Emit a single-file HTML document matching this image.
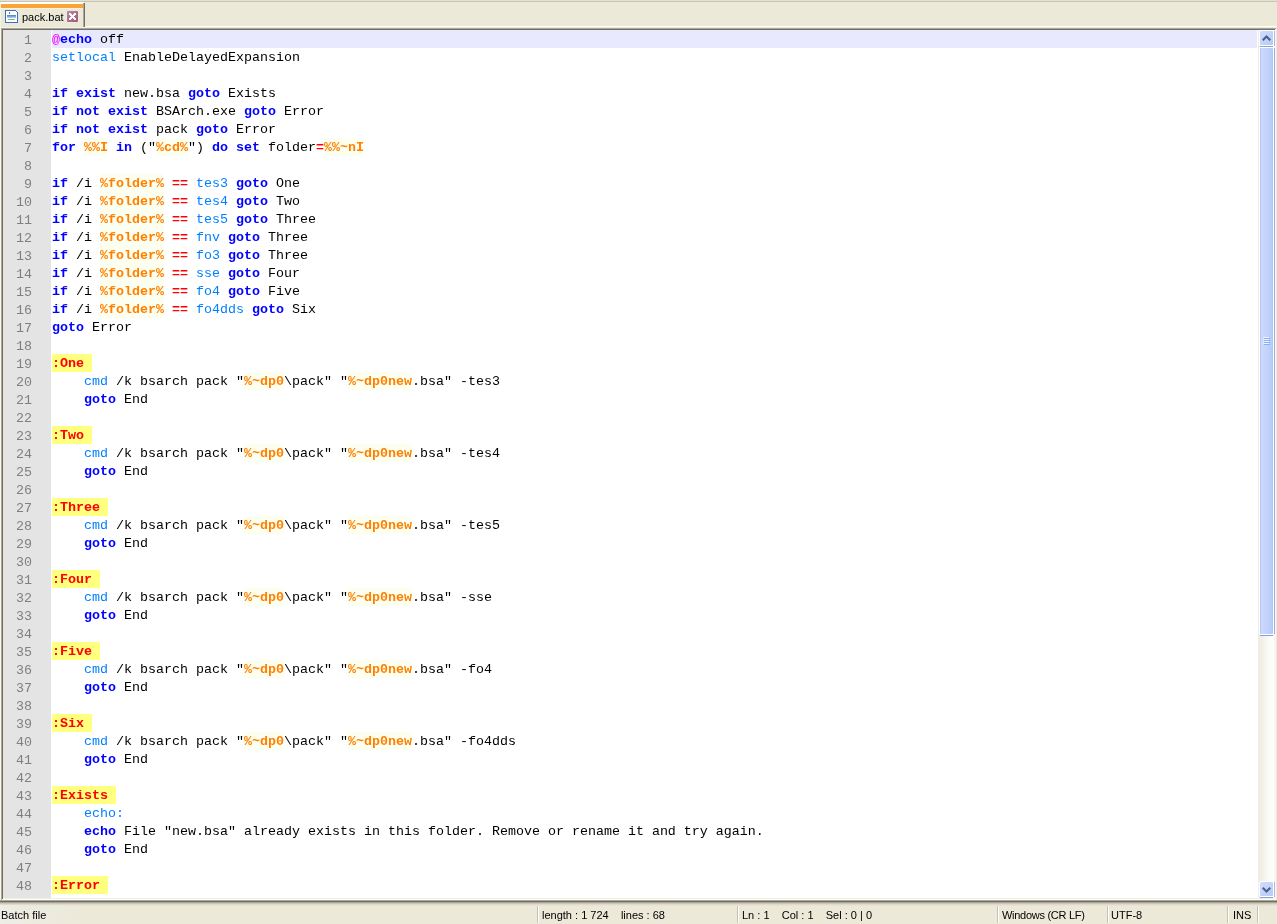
<!DOCTYPE html>
<html><head><meta charset="utf-8">
<style>
*{margin:0;padding:0;box-sizing:border-box}
.ln,.num,.st,.tt{will-change:transform}
html,body{width:1277px;height:924px;overflow:hidden;background:#ECE9D8;position:relative;font-family:"Liberation Sans",sans-serif}
.a{position:absolute}
.num{position:absolute;left:3px;width:29px;height:18px;text-align:right;font-family:"Liberation Mono",monospace;font-size:13.33px;line-height:18px;color:#808080;padding-top:2px}
.ln{position:absolute;left:52px;width:1205px;height:18px;overflow:hidden;font-family:"Liberation Mono",monospace;font-size:13.33px;line-height:18px;color:#000;white-space:pre}
.ln>i{font-style:normal;position:relative;top:1px}
.cur{background:#E8E8FF}
.k{color:#0000FF;font-weight:bold}
.c{color:#0080FF}
.v{color:#FF8000;font-weight:bold;background:#FCFFF0;padding:3px 0 2px}
.o{color:#FF0000;font-weight:bold}
.l{color:#FF0000;font-weight:bold;background:#FFFF80;padding:3px 0 2px}
.h{color:#FF00FF}
.st{position:absolute;top:908px;white-space:pre;color:#000;font-size:11px;line-height:14px}
.sep{position:absolute;top:906px;width:2px;height:17px;border-left:1px solid #C5C2B2;border-right:1px solid #fff}
</style></head><body>
<!-- tab bar -->
<div class="a" style="left:0;top:0;width:1277px;height:1px;background:#E3E1D4"></div>
<div class="a" style="left:0;top:1px;width:1277px;height:1px;background:#C9C5B5"></div>
<div class="a" style="left:0;top:2px;width:1px;height:26px;background:#F5F3E8"></div>
<div class="a" style="left:1px;top:2px;width:83px;height:2px;background:#fff"></div>
<div class="a" style="left:1px;top:4px;width:82px;height:4px;background:#F9A435"></div>
<div class="a" style="left:1px;top:8px;width:82px;height:1px;background:#F4F2E6"></div>
<div class="a" style="left:83px;top:3px;width:1px;height:24px;background:#ACA899"></div>
<div class="a" style="left:84px;top:3px;width:1px;height:24px;background:#716F64"></div>
<div class="a" style="left:85px;top:26px;width:1192px;height:1px;background:#fff"></div>
<div class="a" style="left:1px;top:27px;width:84px;height:1px;background:#F5F2E5"></div>
<!-- icon -->
<svg class="a" style="left:5px;top:10px" width="13" height="13" viewBox="0 0 13 13" shape-rendering="crispEdges">
<path d="M1 1H11L12 2V12H1Z" fill="#fff"/>
<rect x="0" y="0" width="11" height="1" fill="#3B6DC4"/>
<rect x="11" y="1" width="1" height="1" fill="#4A7AC8"/>
<rect x="12" y="2" width="1" height="11" fill="#3B6DC4"/>
<rect x="0" y="0" width="1" height="13" fill="#3B6DC4"/>
<rect x="0" y="12" width="13" height="1" fill="#3B6DC4"/>
<rect x="4" y="2" width="1" height="2" fill="#4A78C8"/>
<rect x="2" y="5" width="9" height="1" fill="#5C8AD6"/>
<rect x="2" y="6" width="9" height="1" fill="#7AA6EA"/>
<rect x="2" y="7" width="9" height="1" fill="#A8C4F0"/>
<rect x="3" y="9" width="7" height="1" fill="#7EC062"/>
</svg>
<div class="a tt" style="left:22px;top:10px;font-size:11px;line-height:14px;white-space:pre">pack.bat</div>
<svg class="a" style="left:67px;top:11px" width="11" height="11" viewBox="0 0 11 11" shape-rendering="crispEdges">
<defs><linearGradient id="cg" x1="0" y1="0" x2="1" y2="1"><stop offset="0" stop-color="#B98AA8"/><stop offset="1" stop-color="#A65674"/></linearGradient></defs>
<rect x="0" y="0" width="11" height="11" fill="url(#cg)"/>
<rect x="0" y="0" width="1" height="1" fill="#A8A0CC"/><rect x="10" y="0" width="1" height="1" fill="#A890B8"/><rect x="0" y="10" width="1" height="1" fill="#A890B8"/><rect x="10" y="10" width="1" height="1" fill="#A890B8"/>
<rect x="2" y="2" width="1" height="1" fill="#fff"/><rect x="3" y="2" width="1" height="1" fill="#fff"/><rect x="7" y="2" width="1" height="1" fill="#fff"/><rect x="8" y="2" width="1" height="1" fill="#fff"/><rect x="2" y="3" width="1" height="1" fill="#fff"/><rect x="3" y="3" width="1" height="1" fill="#fff"/><rect x="4" y="3" width="1" height="1" fill="#fff"/><rect x="6" y="3" width="1" height="1" fill="#fff"/><rect x="7" y="3" width="1" height="1" fill="#fff"/><rect x="8" y="3" width="1" height="1" fill="#fff"/><rect x="3" y="4" width="1" height="1" fill="#fff"/><rect x="4" y="4" width="1" height="1" fill="#fff"/><rect x="5" y="4" width="1" height="1" fill="#fff"/><rect x="6" y="4" width="1" height="1" fill="#fff"/><rect x="7" y="4" width="1" height="1" fill="#fff"/><rect x="4" y="5" width="1" height="1" fill="#fff"/><rect x="5" y="5" width="1" height="1" fill="#fff"/><rect x="6" y="5" width="1" height="1" fill="#fff"/><rect x="3" y="6" width="1" height="1" fill="#fff"/><rect x="4" y="6" width="1" height="1" fill="#fff"/><rect x="5" y="6" width="1" height="1" fill="#fff"/><rect x="6" y="6" width="1" height="1" fill="#fff"/><rect x="7" y="6" width="1" height="1" fill="#fff"/><rect x="2" y="7" width="1" height="1" fill="#fff"/><rect x="3" y="7" width="1" height="1" fill="#fff"/><rect x="4" y="7" width="1" height="1" fill="#fff"/><rect x="6" y="7" width="1" height="1" fill="#fff"/><rect x="7" y="7" width="1" height="1" fill="#fff"/><rect x="8" y="7" width="1" height="1" fill="#fff"/><rect x="2" y="8" width="1" height="1" fill="#fff"/><rect x="3" y="8" width="1" height="1" fill="#fff"/><rect x="7" y="8" width="1" height="1" fill="#fff"/><rect x="8" y="8" width="1" height="1" fill="#fff"/></svg>
<!-- editor frame -->
<div class="a" style="left:1px;top:28px;width:1275px;height:1px;background:#ACA899"></div>
<div class="a" style="left:1px;top:28px;width:1px;height:872px;background:#ACA899"></div>
<div class="a" style="left:2px;top:29px;width:1273px;height:1px;background:#716F64"></div>
<div class="a" style="left:2px;top:29px;width:1px;height:870px;background:#716F64"></div>
<div class="a" style="left:3px;top:30px;width:1272px;height:868px;background:#fff"></div>
<div class="a" style="left:0;top:28px;width:1px;height:872px;background:#FBF8EA"></div>
<div class="a" style="left:3px;top:898px;width:1272px;height:1px;background:#F1EFE2"></div>
<div class="a" style="left:2px;top:899px;width:1274px;height:1px;background:#fff"></div>
<div class="a" style="left:1275px;top:30px;width:1px;height:869px;background:#FAF8EE"></div>
<!-- margin -->
<div class="a" style="left:3px;top:30px;width:48px;height:868px;background:#E4E4E4"></div>
<div class="num" style="top:30px">1</div>
<div class="num" style="top:48px">2</div>
<div class="num" style="top:66px">3</div>
<div class="num" style="top:84px">4</div>
<div class="num" style="top:102px">5</div>
<div class="num" style="top:120px">6</div>
<div class="num" style="top:138px">7</div>
<div class="num" style="top:156px">8</div>
<div class="num" style="top:174px">9</div>
<div class="num" style="top:192px">10</div>
<div class="num" style="top:210px">11</div>
<div class="num" style="top:228px">12</div>
<div class="num" style="top:246px">13</div>
<div class="num" style="top:264px">14</div>
<div class="num" style="top:282px">15</div>
<div class="num" style="top:300px">16</div>
<div class="num" style="top:318px">17</div>
<div class="num" style="top:336px">18</div>
<div class="num" style="top:354px">19</div>
<div class="num" style="top:372px">20</div>
<div class="num" style="top:390px">21</div>
<div class="num" style="top:408px">22</div>
<div class="num" style="top:426px">23</div>
<div class="num" style="top:444px">24</div>
<div class="num" style="top:462px">25</div>
<div class="num" style="top:480px">26</div>
<div class="num" style="top:498px">27</div>
<div class="num" style="top:516px">28</div>
<div class="num" style="top:534px">29</div>
<div class="num" style="top:552px">30</div>
<div class="num" style="top:570px">31</div>
<div class="num" style="top:588px">32</div>
<div class="num" style="top:606px">33</div>
<div class="num" style="top:624px">34</div>
<div class="num" style="top:642px">35</div>
<div class="num" style="top:660px">36</div>
<div class="num" style="top:678px">37</div>
<div class="num" style="top:696px">38</div>
<div class="num" style="top:714px">39</div>
<div class="num" style="top:732px">40</div>
<div class="num" style="top:750px">41</div>
<div class="num" style="top:768px">42</div>
<div class="num" style="top:786px">43</div>
<div class="num" style="top:804px">44</div>
<div class="num" style="top:822px">45</div>
<div class="num" style="top:840px">46</div>
<div class="num" style="top:858px">47</div>
<div class="num" style="top:876px">48</div>
<div class="ln cur" style="top:30px"><i><span class="h">@</span><span class="k">echo</span> off</i></div>
<div class="ln" style="top:48px"><i><span class="c">setlocal</span> EnableDelayedExpansion</i></div>
<div class="ln" style="top:66px"><i></i></div>
<div class="ln" style="top:84px"><i><span class="k">if</span> <span class="k">exist</span> new.bsa <span class="k">goto</span> Exists</i></div>
<div class="ln" style="top:102px"><i><span class="k">if</span> <span class="k">not</span> <span class="k">exist</span> BSArch.exe <span class="k">goto</span> Error</i></div>
<div class="ln" style="top:120px"><i><span class="k">if</span> <span class="k">not</span> <span class="k">exist</span> pack <span class="k">goto</span> Error</i></div>
<div class="ln" style="top:138px"><i><span class="k">for</span> <span class="v">%%I</span> <span class="k">in</span> (&quot;<span class="v">%cd%</span>&quot;) <span class="k">do</span> <span class="k">set</span> folder<span class="o">=</span><span class="v">%%~nI</span></i></div>
<div class="ln" style="top:156px"><i></i></div>
<div class="ln" style="top:174px"><i><span class="k">if</span> /i <span class="v">%folder%</span> <span class="o">==</span> <span class="c">tes3</span> <span class="k">goto</span> One</i></div>
<div class="ln" style="top:192px"><i><span class="k">if</span> /i <span class="v">%folder%</span> <span class="o">==</span> <span class="c">tes4</span> <span class="k">goto</span> Two</i></div>
<div class="ln" style="top:210px"><i><span class="k">if</span> /i <span class="v">%folder%</span> <span class="o">==</span> <span class="c">tes5</span> <span class="k">goto</span> Three</i></div>
<div class="ln" style="top:228px"><i><span class="k">if</span> /i <span class="v">%folder%</span> <span class="o">==</span> <span class="c">fnv</span> <span class="k">goto</span> Three</i></div>
<div class="ln" style="top:246px"><i><span class="k">if</span> /i <span class="v">%folder%</span> <span class="o">==</span> <span class="c">fo3</span> <span class="k">goto</span> Three</i></div>
<div class="ln" style="top:264px"><i><span class="k">if</span> /i <span class="v">%folder%</span> <span class="o">==</span> <span class="c">sse</span> <span class="k">goto</span> Four</i></div>
<div class="ln" style="top:282px"><i><span class="k">if</span> /i <span class="v">%folder%</span> <span class="o">==</span> <span class="c">fo4</span> <span class="k">goto</span> Five</i></div>
<div class="ln" style="top:300px"><i><span class="k">if</span> /i <span class="v">%folder%</span> <span class="o">==</span> <span class="c">fo4dds</span> <span class="k">goto</span> Six</i></div>
<div class="ln" style="top:318px"><i><span class="k">goto</span> Error</i></div>
<div class="ln" style="top:336px"><i></i></div>
<div class="ln" style="top:354px"><i><span class="l">:One </span></i></div>
<div class="ln" style="top:372px"><i>    <span class="c">cmd</span> /k bsarch pack &quot;<span class="v">%~dp0</span>\pack&quot; &quot;<span class="v">%~dp0new</span>.bsa&quot; -tes3</i></div>
<div class="ln" style="top:390px"><i>    <span class="k">goto</span> End</i></div>
<div class="ln" style="top:408px"><i></i></div>
<div class="ln" style="top:426px"><i><span class="l">:Two </span></i></div>
<div class="ln" style="top:444px"><i>    <span class="c">cmd</span> /k bsarch pack &quot;<span class="v">%~dp0</span>\pack&quot; &quot;<span class="v">%~dp0new</span>.bsa&quot; -tes4</i></div>
<div class="ln" style="top:462px"><i>    <span class="k">goto</span> End</i></div>
<div class="ln" style="top:480px"><i></i></div>
<div class="ln" style="top:498px"><i><span class="l">:Three </span></i></div>
<div class="ln" style="top:516px"><i>    <span class="c">cmd</span> /k bsarch pack &quot;<span class="v">%~dp0</span>\pack&quot; &quot;<span class="v">%~dp0new</span>.bsa&quot; -tes5</i></div>
<div class="ln" style="top:534px"><i>    <span class="k">goto</span> End</i></div>
<div class="ln" style="top:552px"><i></i></div>
<div class="ln" style="top:570px"><i><span class="l">:Four </span></i></div>
<div class="ln" style="top:588px"><i>    <span class="c">cmd</span> /k bsarch pack &quot;<span class="v">%~dp0</span>\pack&quot; &quot;<span class="v">%~dp0new</span>.bsa&quot; -sse</i></div>
<div class="ln" style="top:606px"><i>    <span class="k">goto</span> End</i></div>
<div class="ln" style="top:624px"><i></i></div>
<div class="ln" style="top:642px"><i><span class="l">:Five </span></i></div>
<div class="ln" style="top:660px"><i>    <span class="c">cmd</span> /k bsarch pack &quot;<span class="v">%~dp0</span>\pack&quot; &quot;<span class="v">%~dp0new</span>.bsa&quot; -fo4</i></div>
<div class="ln" style="top:678px"><i>    <span class="k">goto</span> End</i></div>
<div class="ln" style="top:696px"><i></i></div>
<div class="ln" style="top:714px"><i><span class="l">:Six </span></i></div>
<div class="ln" style="top:732px"><i>    <span class="c">cmd</span> /k bsarch pack &quot;<span class="v">%~dp0</span>\pack&quot; &quot;<span class="v">%~dp0new</span>.bsa&quot; -fo4dds</i></div>
<div class="ln" style="top:750px"><i>    <span class="k">goto</span> End</i></div>
<div class="ln" style="top:768px"><i></i></div>
<div class="ln" style="top:786px"><i><span class="l">:Exists </span></i></div>
<div class="ln" style="top:804px"><i>    <span class="c">echo:</span></i></div>
<div class="ln" style="top:822px"><i>    <span class="k">echo</span> File &quot;new.bsa&quot; already exists in this folder. Remove or rename it and try again.</i></div>
<div class="ln" style="top:840px"><i>    <span class="k">goto</span> End</i></div>
<div class="ln" style="top:858px"><i></i></div>
<div class="ln" style="top:876px"><i><span class="l">:Error </span></i></div>
<!-- scrollbar -->
<div class="a" style="left:1258px;top:30px;width:17px;height:868px;background:linear-gradient(90deg,#EEEDE5 0,#F3F1EA 30%,#FCFCF8 70%,#FEFEFA 100%)"></div>
<div class="a" style="left:1274px;top:30px;width:1px;height:868px;background:#F5F3EB"></div>
<div class="a" style="left:1259px;top:30px;width:15px;height:16px;border:1px solid #fff;border-radius:2px;background:linear-gradient(135deg,#D2DEFD,#C4D3FC 50%,#B4C9F9)"></div><div class="a" style="left:1260px;top:46px;width:13px;height:1px;background:#86A6DA"></div><div class="a" style="left:1274px;top:31px;width:1px;height:15px;background:#A9BCE0"></div><svg class="a" style="left:1260px;top:31px" width="13" height="14" viewBox="0 0 13 14"><polygon points="2,8.5 6.5,4 11,8.5 9.5,10 6.5,7 3.5,10" fill="#4D6185"/></svg><div class="a" style="left:1259px;top:881px;width:15px;height:16px;border:1px solid #fff;border-radius:2px;background:linear-gradient(135deg,#D2DEFD,#C4D3FC 50%,#B4C9F9)"></div><div class="a" style="left:1260px;top:897px;width:13px;height:1px;background:#86A6DA"></div><div class="a" style="left:1274px;top:882px;width:1px;height:15px;background:#A9BCE0"></div><svg class="a" style="left:1260px;top:882px" width="13" height="14" viewBox="0 0 13 14"><polygon points="2,6.5 3.5,5 6.5,8 9.5,5 11,6.5 6.5,11" fill="#4D6185"/></svg><div class="a" style="left:1259px;top:47px;width:15px;height:588px;border:1px solid #fff;border-radius:2px;background:linear-gradient(90deg,#B6C6F5 0,#B6C6F5 1px,#CAD9FC 1px,#C4D3FC 50%,#B6CDFA 88%,#B0C4F2 100%)"></div><div class="a" style="left:1274px;top:48px;width:1px;height:586px;background:#9DB2D8"></div><div class="a" style="left:1260px;top:635px;width:13px;height:1px;background:#7FA0D8"></div><div class="a" style="left:1263px;top:337px;width:6px;height:1px;background:#EEF4FE"></div><div class="a" style="left:1264px;top:338px;width:6px;height:1px;background:#8CAEF5"></div><div class="a" style="left:1263px;top:339px;width:6px;height:1px;background:#EEF4FE"></div><div class="a" style="left:1264px;top:340px;width:6px;height:1px;background:#8CAEF5"></div><div class="a" style="left:1263px;top:341px;width:6px;height:1px;background:#EEF4FE"></div><div class="a" style="left:1264px;top:342px;width:6px;height:1px;background:#8CAEF5"></div><div class="a" style="left:1263px;top:343px;width:6px;height:1px;background:#EEF4FE"></div><div class="a" style="left:1264px;top:344px;width:6px;height:1px;background:#8CAEF5"></div>
<!-- status -->
<div class="a" style="left:0;top:900px;width:1277px;height:24px;background:linear-gradient(180deg,#ACA899 0,#ACA899 1px,#716F64 1px,#716F64 2px,#A9A595 2px,#A9A595 3px,#CBC8BA 3px,#CBC8BA 4px,#DEDBCE 4px,#DEDBCE 5px,#E7E4D5 5px,#E7E4D5 6px,#ECE9D8 6px)"></div>
<div class="a" style="left:0;top:905px;width:90px;height:19px;background:linear-gradient(90deg,rgba(238,237,230,1) 0,rgba(238,237,230,.6) 30px,rgba(236,233,216,0) 90px)"></div>
<div class="st" style="left:1px">Batch file</div>
<div class="sep" style="left:537px"></div>
<div class="st" style="left:542px">length : 1 724    lines : 68</div>
<div class="sep" style="left:737px"></div>
<div class="st" style="left:742px">Ln : 1    Col : 1    Sel : 0 | 0</div>
<div class="sep" style="left:997px"></div>
<div class="st" style="left:1002px;letter-spacing:-0.28px">Windows (CR LF)</div>
<div class="sep" style="left:1107px"></div>
<div class="st" style="left:1111px">UTF-8</div>
<div class="sep" style="left:1227px"></div>
<div class="st" style="left:1233px">INS</div>
<div class="sep" style="left:1257px"></div>
</body></html>
